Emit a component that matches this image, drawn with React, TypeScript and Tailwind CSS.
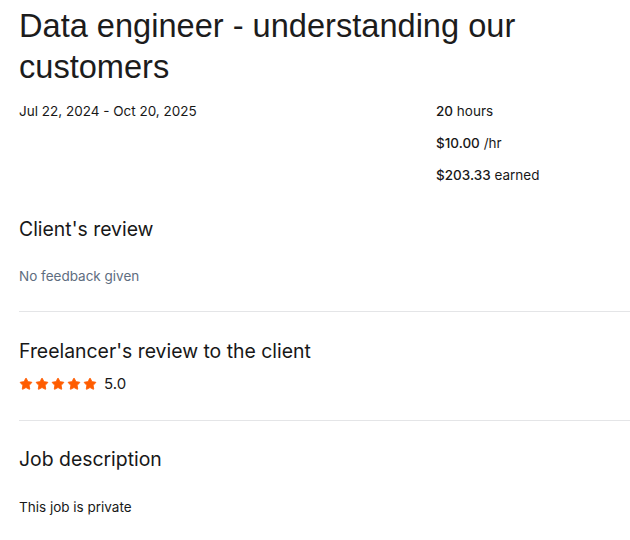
import { Star } from "lucide-react";

const stats = [
  { value: "20", label: "hours" },
  { value: "$10.00", label: "/hr" },
  { value: "$203.33", label: "earned" },
];

function Stars() {
  return (
    <div className="flex items-center gap-[2px]">
      {[0, 1, 2, 3, 4].map((i) => (
        <Star key={i} className="h-[14px] w-[14px] fill-[#ff5c00] text-[#ff5c00]" strokeWidth={1.5} />
      ))}
    </div>
  );
}

export default function App() {
  return (
    <div className="min-h-[540px] bg-white pl-[19px] pt-[5px] text-[#181818] font-['Inter',sans-serif]">
      <h1 className="pr-[40px] font-['Liberation_Sans',Arial,sans-serif] text-[32.6px] leading-[41px] text-[#1c1c1c]">
        Data engineer - understanding our customers
      </h1>

      <div className="mt-[14px] flex text-[13.5px] leading-[20px]">
        <div className="w-[417px]">Jul 22, 2024 - Oct 20, 2025</div>
        <div className="flex flex-col gap-[12px]">
          {stats.map((s) => (
            <div key={s.label}>
              <span className="font-medium">{s.value}</span> {s.label}
            </div>
          ))}
        </div>
      </div>

      <section className="pb-[25px] border-b border-[#e4e5e7]">
        <h2 className="mt-[31px] text-[19.4px] leading-[26px]">Client's review</h2>
        <p className="mt-[24px] text-[13.5px] leading-[20px] text-[#5e6d80]">No feedback given</p>
      </section>

      <section className="pb-[26px] border-b border-[#e4e5e7]">
        <h2 className="mt-[26px] text-[19.4px] leading-[26px]">Freelancer's review to the client</h2>
        <div className="mt-[10px] flex items-center gap-[7px]">
          <Stars />
          <span className="text-[15px] leading-[20px]">5.0</span>
        </div>
      </section>

      <section>
        <h2 className="mt-[25px] text-[19.4px] leading-[26px]">Job description</h2>
        <p className="mt-[25px] text-[13.5px] leading-[20px]">This job is private</p>
      </section>
    </div>
  );
}
